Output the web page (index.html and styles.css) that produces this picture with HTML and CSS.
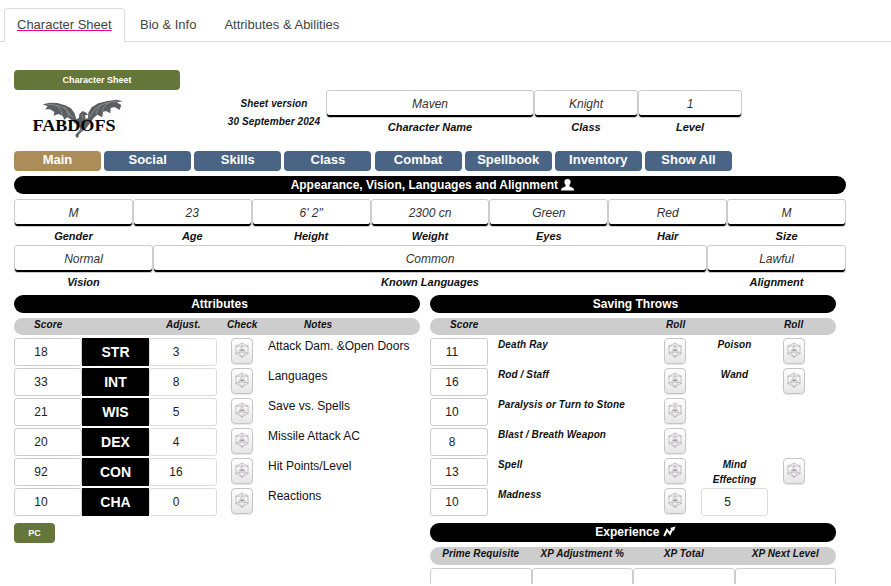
FILE: index.html
```
<!DOCTYPE html>
<html lang="en">
<head>
<meta charset="utf-8">
<title>Character Sheet</title>
<link rel="stylesheet" href="styles.css">
</head>
<body>
<svg class="defs" aria-hidden="true">
  <symbol id="die" viewBox="0 0 14 16">
    <g fill="none" stroke-width=".6">
      <path stroke="#a9a4a8" d="M7 1 13 4.300V11.500L7 15 1 11.500V4.300Z"/>
      <path stroke="#aba6ad" d="M7 1V4L3.500 10.300H10.500L7 4M1 4.300 7 4 13 4.300M13 11.500 10.500 10.300 7 15 3.500 10.300 1 11.500"/>
    </g>
    <path d="M5.200 8.300 7 7 8.800 8.300V9.300H5.200Z" fill="#98959c"/>
    <g fill="#b0adb2"><circle cx="1.200" cy="4.300" r=".7"/><circle cx="12.800" cy="4.300" r=".7"/><circle cx="1.200" cy="11.500" r=".7"/><circle cx="12.800" cy="11.500" r=".7"/><circle cx="7" cy="15" r=".7"/></g>
  </symbol>
</svg>
<nav class="tabs">
  <a class="tab active"><span>Character Sheet</span></a>
  <a class="tab">Bio &amp; Info</a>
  <a class="tab">Attributes &amp; Abilities</a>
</nav>
<main class="sheet">
  <header class="head">
    <div class="brand">
      <button class="green wide">Character Sheet</button>
      <svg class="logo" viewBox="0 0 100 46" width="100" height="46">
        <g transform="translate(-4 -4) scale(.3333)">
          <path fill="#5d5e62" d="M68 43 90 38 112 39 135 46 152 54 163 68 169 88 177 84 178 72 188 63 200 69 204 75 195 76 197 87 204 84 205 68 215 52 235 40 262 33 290 29 309 34 290 37 304 45 299 60 284 51 272 54 271 70 258 63 249 66 247 82 232 74 221 84 208 102 196 118 184 126 176 134 176 141 169 143 166 134 172 128 181 118 176 106 164 100 152 88 142 82 133 89 128 78 116 72 101 77 103 66 90 58 76 58 83 49Z"/>
          <path stroke="#b5b6ba" stroke-width="1.500" fill="none" d="M82 43Q118 45 135 55L160 84M108 45Q124 56 126 75M132 51Q145 62 148 82M292 33Q245 39 226 56L208 82M267 39Q248 48 247 66M242 46Q229 58 229 73M185 72 190 85M182 100Q194 108 177 127"/>
        </g>
        <text class="wordmark" x="8.500" y="36.800" textLength="83" lengthAdjust="spacingAndGlyphs">FABDOFS</text>
      </svg>
    </div>
    <div class="version">Sheet version<br>30 September 2024</div>
    <div class="fields head-fields">
      <div class="field"><div class="value">Maven</div><label>Character Name</label></div>
      <div class="field"><div class="value">Knight</div><label>Class</label></div>
      <div class="field"><div class="value">1</div><label>Level</label></div>
    </div>
  </header>
  <nav class="menu">
    <button class="on">Main</button><button>Social</button><button>Skills</button><button>Class</button><button>Combat</button><button>Spellbook</button><button>Inventory</button><button>Show All</button>
  </nav>
  <h2 class="bar">Appearance, Vision, Languages and Alignment <svg width="13" height="12" viewBox="0 0 13 12"><path fill="#fff" d="M6.500 0C9 0 9.700 1.500 9.600 3.300C9.500 4.900 8.600 5.600 8.300 6.500C8.200 7.700 9.500 7.800 11 8.400C12.500 8.900 13 9.500 13 11.500H0C0 9.500.5 8.900 2 8.400C3.500 7.800 4.800 7.700 4.700 6.500C4.400 5.600 3.500 4.900 3.400 3.300C3.300 1.500 4 0 6.500 0Z"/></svg></h2>
  <div class="fields looks">
    <div class="field"><div class="value">M</div><label>Gender</label></div>
    <div class="field"><div class="value">23</div><label>Age</label></div>
    <div class="field"><div class="value">6' 2"</div><label>Height</label></div>
    <div class="field"><div class="value">2300 cn</div><label>Weight</label></div>
    <div class="field"><div class="value">Green</div><label>Eyes</label></div>
    <div class="field"><div class="value">Red</div><label>Hair</label></div>
    <div class="field"><div class="value">M</div><label>Size</label></div>
  </div>
  <div class="fields senses">
    <div class="field"><div class="value">Normal</div><label>Vision</label></div>
    <div class="field"><div class="value">Common</div><label>Known Languages</label></div>
    <div class="field"><div class="value">Lawful</div><label>Alignment</label></div>
  </div>
  <div class="columns">
    <section>
      <h2 class="bar">Attributes</h2>
      <div class="legend attr-legend"><span>Score</span><span>Adjust.</span><span>Check</span><span>Notes</span></div>
      <div class="attr"><div class="num">18</div><b>STR</b><div class="num light">3</div><button class="roll"><svg><use href="#die"/></svg></button><p>Attack Dam. &amp;Open Doors</p></div>
      <div class="attr"><div class="num">33</div><b>INT</b><div class="num light">8</div><button class="roll"><svg><use href="#die"/></svg></button><p>Languages</p></div>
      <div class="attr"><div class="num">21</div><b>WIS</b><div class="num light">5</div><button class="roll"><svg><use href="#die"/></svg></button><p>Save vs. Spells</p></div>
      <div class="attr"><div class="num">20</div><b>DEX</b><div class="num light">4</div><button class="roll"><svg><use href="#die"/></svg></button><p>Missile Attack AC</p></div>
      <div class="attr"><div class="num">92</div><b>CON</b><div class="num light">16</div><button class="roll"><svg><use href="#die"/></svg></button><p>Hit Points/Level</p></div>
      <div class="attr"><div class="num">10</div><b>CHA</b><div class="num light">0</div><button class="roll"><svg><use href="#die"/></svg></button><p>Reactions</p></div>
      <button class="green pc">PC</button>
    </section>
    <section>
      <h2 class="bar">Saving Throws</h2>
      <div class="legend save-legend"><span>Score</span><span>Roll</span><span>Roll</span></div>
      <div class="save"><div class="num">11</div><p>Death Ray</p><button class="roll"><svg><use href="#die"/></svg></button><p class="mid">Poison</p><button class="roll"><svg><use href="#die"/></svg></button></div>
      <div class="save"><div class="num">16</div><p>Rod / Staff</p><button class="roll"><svg><use href="#die"/></svg></button><p class="mid">Wand</p><button class="roll"><svg><use href="#die"/></svg></button></div>
      <div class="save"><div class="num">10</div><p>Paralysis or Turn to Stone</p><button class="roll"><svg><use href="#die"/></svg></button></div>
      <div class="save"><div class="num">8</div><p>Blast / Breath Weapon</p><button class="roll"><svg><use href="#die"/></svg></button></div>
      <div class="save"><div class="num">13</div><p>Spell</p><button class="roll"><svg><use href="#die"/></svg></button><p class="mid">Mind<br>Effecting</p><button class="roll"><svg><use href="#die"/></svg></button></div>
      <div class="save"><div class="num">10</div><p>Madness</p><button class="roll"><svg><use href="#die"/></svg></button><div class="num light extra">5</div></div>
      <h2 class="bar xp-bar">Experience <svg width="13" height="12" viewBox="0 0 13 12"><path fill="none" stroke="#fff" stroke-width="2" d="M1.200 10 4 4 7 7.800 9.500 2.500"/><path fill="#fff" d="M7 2 12.500.5 10.800 5Z"/></svg></h2>
      <div class="legend xp-legend"><span>Prime Requisite</span><span>XP Adjustment %</span><span>XP Total</span><span>XP Next Level</span></div>
      <div class="xp-boxes"><div></div><div></div><div></div><div></div></div>
    </section>
  </div>
</main>
</body>
</html>
```
FILE: styles.css
```
* { box-sizing: border-box; }
html { overflow: hidden; background: #fff; }
body {
  margin: 0;
  height: 584px;
  overflow: hidden;
  background: #fff;
  color: #111;
  font: 12px/16px "Liberation Sans", Arial, sans-serif;
}
button { border: 0; padding: 0; margin: 0; font: inherit; display: block; }
p, h2 { margin: 0; }
.defs { display: none; }

.tabs {
  display: flex;
  height: 42px;
  padding: 8px 0 0 4px;
  border-bottom: 1px solid #ddd;
  font-size: 13px;
  line-height: 18px;
  color: #444;
}
.tab { padding: 8px 15px 0; height: 33px; }
.tab:last-child { margin-left: -2px; }
.tab.active {
  width: 121px;
  height: 34px;
  padding: 7px 12px 0;
  background: #fff;
  border: 1px solid #ddd;
  border-bottom: 0;
  border-radius: 4px 4px 0 0;
}
.tab.active span {
  text-decoration: underline;
  text-decoration-color: #e10098;
  text-decoration-skip-ink: none;
}

.sheet { width: 832px; margin-left: 14px; padding-top: 28px; }
.head { display: flex; height: 81px; }
.brand { width: 208px; }
.green {
  height: 20px;
  border-radius: 4px;
  background: #65763b;
  color: #fff;
  font-weight: bold;
  font-size: 9px;
}
.wide { width: 166px; }
.logo { display: block; margin: 4px 0 0 10px; overflow: visible; }
.wordmark { font: bold 16.500px "Liberation Serif", serif; fill: #000; }
.version {
  width: 104px;
  padding-top: 25px;
  text-align: center;
  font: italic bold 10px/18px "Liberation Sans", Arial, sans-serif;
  letter-spacing: .1px;
  white-space: nowrap;
}
.head-fields { width: 416px; padding-top: 20px; grid-template-columns: 208px 104px 104px; }

.fields { display: grid; }
.field { text-align: center; font-style: italic; }
.value {
  height: 28px;
  border: 1px solid #ccc;
  border-radius: 3px;
  box-shadow: inset 0 -2px #000;
  line-height: 26px;
  color: #333;
}
.field label { display: block; font-weight: bold; font-size: 11px; line-height: 18px; }
.looks { grid-template-columns: repeat(7, 1fr); margin-top: 5px; }
.senses { grid-template-columns: 139px 554px 139px; }

.menu { display: flex; gap: 3.150px; }
.menu button {
  width: 87px;
  height: 20px;
  border-radius: 4px;
  background: #4a6485;
  color: #fff;
  font-weight: bold;
  font-size: 13px;
  line-height: 18px;
  padding-bottom: 2px;
}
.menu .on { background: #ac8c59; }

.bar {
  height: 18px;
  padding-left: 5px;
  border-radius: 9px;
  background: #000;
  color: #fff;
  text-align: center;
  font-size: 12px;
  line-height: 18px;
}
.menu + .bar { margin-top: 5px; }
.bar svg { vertical-align: -2px; }

.columns { display: grid; grid-template-columns: 406px 406px; gap: 10px; margin-top: 4px; }
.legend {
  display: grid;
  height: 17px;
  margin: 5px 0 3px;
  border-radius: 9px;
  background: #cdcdcd;
  font: italic bold 10px/14px "Liberation Sans", Arial, sans-serif;
  letter-spacing: .1px;
  white-space: nowrap;
}
.attr-legend { grid-template-columns: 132px 61px 77px 1fr; padding-left: 20px; }
.save-legend { grid-template-columns: 216px 118px 1fr; padding-left: 20px; }

.attr, .save { display: grid; height: 30px; align-items: start; }
.attr { grid-template-columns: 68px 67px 82px 37px 1fr; }
.save { grid-template-columns: 58px 10px 166px 37px 67px 15px 1fr; }
.num {
  height: 28px;
  border: 1px solid #ccc;
  border-radius: 3px;
  padding-right: 14px;
  line-height: 26px;
  text-align: center;
  color: #222;
}
.num.light { width: 68px; border-color: #ddd; }
.attr b {
  height: 28px;
  background: #000;
  color: #fff;
  text-align: center;
  font-size: 14px;
  line-height: 29px;
}
.attr p { white-space: nowrap; }
.save .num { grid-column: 1; }
.save p {
  grid-column: 3;
  margin-top: -1px;
  font: italic bold 10px/15px "Liberation Sans", Arial, sans-serif;
  letter-spacing: .1px;
}
.save .roll { grid-column: 4; }
.save .mid { grid-column: 5; text-align: center; }
.save .mid + .roll { grid-column: 7; }
.save .extra { grid-column: 5; width: 67px; }
.roll {
  width: 22px;
  height: 26px;
  border: 1px solid #c5c5c5;
  border-radius: 4px;
  background: linear-gradient(#fff, #e6e6e6);
  box-shadow: 0 1px 1px rgba(0, 0, 0, .1);
}
.roll svg { display: block; width: 14px; height: 16px; margin: -2px auto 0; }
.pc { width: 41px; margin-top: 5px; }

.xp-bar { margin-top: 5px; height: 19px; line-height: 19px; }
.xp-legend { grid-template-columns: repeat(4, 1fr); height: 18px; text-align: center; }
.xp-boxes { display: grid; grid-template-columns: repeat(4, 1fr); height: 16px; overflow: hidden; }
.xp-boxes div { height: 28px; border: 1px solid #ccc; border-radius: 3px; }
```
